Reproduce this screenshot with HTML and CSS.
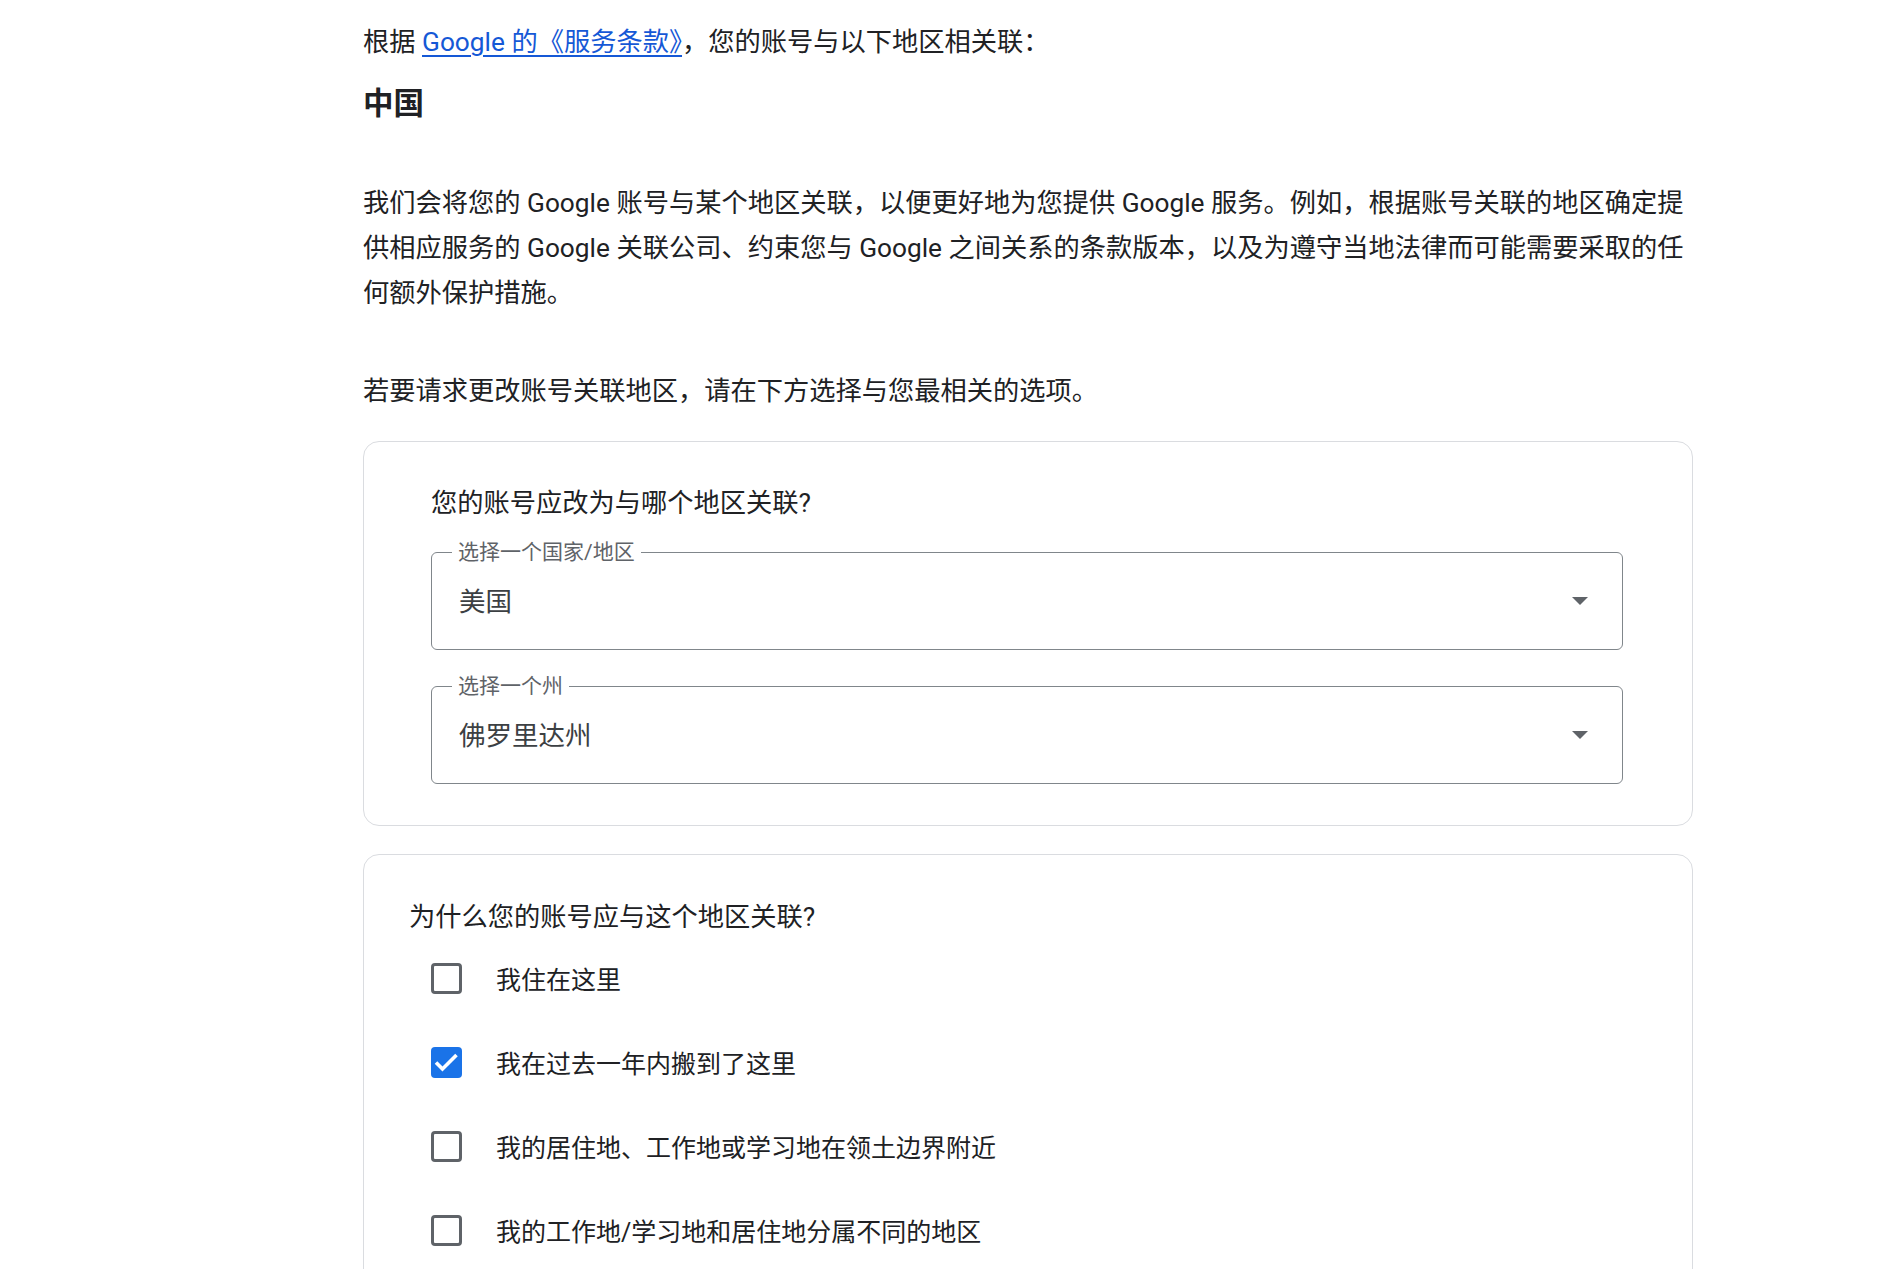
FILE: index.html
```html
<!DOCTYPE html>
<html lang="zh-CN">
<head>
    <meta charset="UTF-8">
    <meta name="viewport" content="width=device-width, initial-scale=1.0">
    <title>账号关联地区</title>
    <link rel="stylesheet" href="styles.css">
</head>
<body>
    <div class="page">
        <p class="intro">根据 <a href="#">Google 的《服务条款》</a>，您的账号与以下地区相关联：</p>
        <h2 class="region">中国</h2>

        <p class="desc">我们会将您的 Google 账号与某个地区关联，以便更好地为您提供 Google 服务。例如，根据账号关联的地区确定提供相应服务的 Google 关联公司、约束您与 Google 之间关系的条款版本，以及为遵守当地法律而可能需要采取的任何额外保护措施。</p>

        <p class="hint">若要请求更改账号关联地区，请在下方选择与您最相关的选项。</p>

        <div class="card card-region">
            <div class="card-title">您的账号应改为与哪个地区关联?</div>

            <div class="select">
                <span class="select-label">选择一个国家/地区</span>
                <span class="select-value">美国</span>
                <svg class="select-arrow" width="16" height="8" viewBox="0 0 16 8"><path d="M0 0h16L8 8z" fill="#5f6368"/></svg>
            </div>

            <div class="select">
                <span class="select-label">选择一个州</span>
                <span class="select-value">佛罗里达州</span>
                <svg class="select-arrow" width="16" height="8" viewBox="0 0 16 8"><path d="M0 0h16L8 8z" fill="#5f6368"/></svg>
            </div>
        </div>

        <div class="card card-reason">
            <div class="card-title">为什么您的账号应与这个地区关联?</div>

            <label class="option">
                <span class="checkbox"></span>
                <span class="option-text">我住在这里</span>
            </label>
            <label class="option">
                <span class="checkbox checked">
                    <svg width="31" height="31" viewBox="0 0 31 31"><polyline points="5,15.5 11.5,22 25.5,8" fill="none" stroke="#fff" stroke-width="3.6"/></svg>
                </span>
                <span class="option-text">我在过去一年内搬到了这里</span>
            </label>
            <label class="option">
                <span class="checkbox"></span>
                <span class="option-text">我的居住地、工作地或学习地在领土边界附近</span>
            </label>
            <label class="option">
                <span class="checkbox"></span>
                <span class="option-text">我的工作地/学习地和居住地分属不同的地区</span>
            </label>
        </div>
    </div>
</body>
</html>
```

FILE: styles.css
```css
body {
    margin: 0;
    background-color: #fff;
    color: #202124;
    font-family: Roboto, "Noto Sans CJK SC", sans-serif;
}

.page {
    width: 1330px;
    margin-left: 363px;
    padding-top: 20px;
}

.intro,
.desc,
.hint {
    margin: 0;
    font-size: 26.25px;
    line-height: 45px;
}

.intro a {
    color: #1558d6;
    text-decoration: underline;
    text-underline-offset: 4px;
}

.region {
    margin: 19px 0 0;
    font-size: 30.5px;
    line-height: 40px;
    font-weight: 700;
}

.desc {
    margin-top: 57px;
}

.hint {
    margin-top: 53px;
}

.card {
    border: 1px solid #dadce0;
    border-radius: 16px;
    box-sizing: border-box;
}

.card-region {
    margin-top: 27px;
    padding: 39px 69px 41px 67px;
}

.card-reason {
    margin-top: 28px;
    padding: 40px 46px 40px 45px;
}

.card-title {
    font-size: 26.25px;
    line-height: 45px;
}

.card-region .card-title {
    margin-bottom: 26px;
}

.card-reason .card-title {
    margin-bottom: -4px;
}

.select {
    position: relative;
    display: flex;
    align-items: center;
    height: 98px;
    box-sizing: border-box;
    border: 1px solid #80868b;
    border-radius: 6px;
    padding: 0 34px 4px 27px;
}

.select + .select {
    margin-top: 36px;
}

.select-label {
    position: absolute;
    top: -14px;
    left: 20px;
    padding: 0 6px;
    background-color: #fff;
    color: #5f6368;
    font-size: 21px;
    line-height: 26px;
}

.select-value {
    flex: 1;
    color: #3c4043;
    font-size: 26.5px;
}

.select-arrow {
    display: block;
    margin-top: 4px;
}

.option {
    display: flex;
    align-items: center;
    height: 84px;
    padding-left: 22px;
}

.checkbox {
    width: 31px;
    height: 31px;
    box-sizing: border-box;
    border: 3px solid #5f6368;
    border-radius: 4px;
    flex-shrink: 0;
}

.checkbox.checked {
    border: none;
    background-color: #1a73e8;
}

.checkbox svg {
    display: block;
}

.option-text {
    margin-left: 34px;
    font-size: 25px;
}
```
